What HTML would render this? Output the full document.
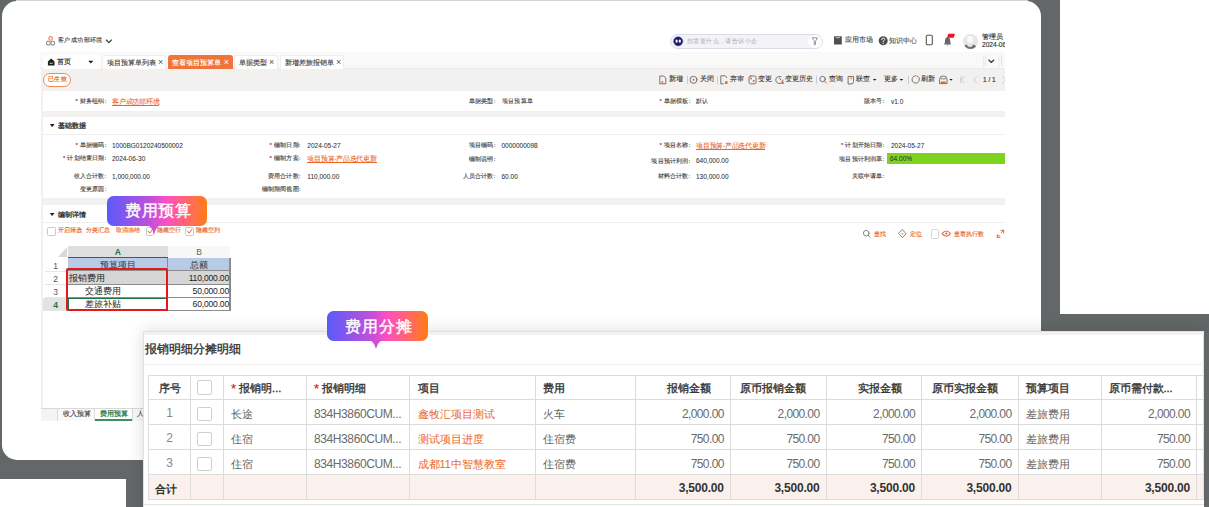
<!DOCTYPE html>
<html><head><meta charset="utf-8">
<style>
*{box-sizing:border-box;margin:0;padding:0}
html,body{width:1209px;height:507px;overflow:hidden;background:#fff;font-family:"Liberation Sans",sans-serif}
.a{position:absolute;white-space:nowrap}
</style></head><body>

<div class="a" style="left:0.00px;top:0.00px;width:1060.00px;height:479.00px;background:#636768"></div>
<div class="a" style="left:126.00px;top:314.00px;width:1083.00px;height:193.00px;background:#636768"></div>
<div class="a" style="left:16.00px;top:0.00px;width:1012.00px;height:1.00px;background:#d2d3d3"></div>
<div class="a" style="left:2px;top:1px;width:1039px;height:459px;background:#fff;border-radius:15px;overflow:hidden"><div class="a" style="left:-2px;top:-1px;width:1209px;height:507px">
<div class="a" style="left:58.00px;top:36.80px;font-size:6.000px;line-height:7.80px;color:#444;font-weight:normal;letter-spacing:0.4px;-webkit-text-stroke:0.14px #444;transform-origin:0 0">客户成功部环境</div>
<div class="a" style="left:670.00px;top:34.00px;width:153.00px;height:15.00px;border-radius:8px;background:#f3f3f8;border:1px solid #dcdce6"></div>
<div class="a" style="left:687.00px;top:37.60px;font-size:6.000px;line-height:7.80px;color:#b4b4bc;font-weight:normal;letter-spacing:0.4px;-webkit-text-stroke:0.05px #b4b4bc;transform-origin:0 0">您需要什么，请告诉小企</div>
<div class="a" style="left:808.00px;top:35.00px;width:13.50px;height:13.00px;border-radius:50%;background:#fff"></div>
<div class="a" style="left:845.00px;top:36.27px;font-size:6.500px;line-height:8.45px;color:#555;font-weight:normal;;-webkit-text-stroke:0.14px #555;transform-origin:0 0">应用市场</div>
<div class="a" style="left:889.00px;top:36.77px;font-size:6.500px;line-height:8.45px;color:#555;font-weight:normal;;-webkit-text-stroke:0.14px #555;transform-origin:0 0">知识中心</div>
<div class="a" style="left:962.5px;top:34px;width:15px;height:15px;border-radius:50%;background:#e6e6e6;overflow:hidden"><div class="a" style="left:4.2px;top:2.2px;width:6.6px;height:6.6px;border-radius:50%;background:#fafafa"></div><div class="a" style="left:0.5px;top:10.3px;width:14px;height:9px;border-radius:50%;background:#6f6f6f"></div><div class="a" style="left:4.5px;top:9.8px;width:6px;height:3px;border-radius:0 0 3px 3px;background:#e6e6e6"></div></div>
<div class="a" style="left:982px;top:33px;width:23px;height:16px;overflow:hidden">
<div class="a" style="left:0.00px;top:0.37px;font-size:6.500px;line-height:8.45px;color:#333;font-weight:normal;;-webkit-text-stroke:0.14px #333;transform-origin:0 0">管理员</div>
<div class="a" style="left:0.00px;top:7.71px;font-size:6.600px;line-height:8.58px;color:#333;font-weight:normal;;-webkit-text-stroke:0.14px #333;transform-origin:0 0">2024-06-01</div>
</div>
<div class="a" style="left:40.00px;top:52.00px;width:965.00px;height:17.00px;background:#f9f9fa;border-bottom:1px solid #ebebeb"></div>
<div class="a" style="left:43.40px;top:55.00px;width:56.60px;height:14.00px;background:#fff;border-radius:3px 3px 0 0"></div>
<div class="a" style="left:57.20px;top:58.07px;font-size:6.500px;line-height:8.45px;color:#333;font-weight:normal;;-webkit-text-stroke:0.2px #333;transform-origin:0 0">首页</div>
<div class="a" style="left:102.00px;top:55.00px;width:64.00px;height:14.00px;background:#fff;border:1px solid #eceef2;border-bottom:none;border-radius:3px 3px 0 0"></div>
<div class="a" style="left:106.50px;top:57.57px;font-size:6.500px;line-height:8.45px;color:#444;font-weight:normal;;-webkit-text-stroke:0.14px #444;transform-origin:0 0">项目预算单列表<span style="font-size:9px;margin-left:2.5px;-webkit-text-stroke:0;vertical-align:-0.5px;color:#555">×</span></div>
<div class="a" style="left:167.80px;top:55.00px;width:65.20px;height:14.00px;background:#f07438;border-radius:3px 3px 0 0"></div>
<div class="a" style="left:172.30px;top:57.57px;font-size:6.500px;line-height:8.45px;color:#fff;font-weight:normal;;-webkit-text-stroke:0.14px #fff;transform-origin:0 0">查看项目预算单<span style="font-size:9px;margin-left:2.5px;-webkit-text-stroke:0;vertical-align:-0.5px">×</span></div>
<div class="a" style="left:234.00px;top:55.00px;width:44.00px;height:14.00px;background:#fff;border:1px solid #eceef2;border-bottom:none;border-radius:3px 3px 0 0"></div>
<div class="a" style="left:238.50px;top:57.57px;font-size:6.500px;line-height:8.45px;color:#444;font-weight:normal;;-webkit-text-stroke:0.14px #444;transform-origin:0 0">单据类型<span style="font-size:9px;margin-left:2.5px;-webkit-text-stroke:0;vertical-align:-0.5px;color:#555">×</span></div>
<div class="a" style="left:280.00px;top:55.00px;width:64.00px;height:14.00px;background:#fff;border:1px solid #eceef2;border-bottom:none;border-radius:3px 3px 0 0"></div>
<div class="a" style="left:284.50px;top:57.57px;font-size:6.500px;line-height:8.45px;color:#444;font-weight:normal;;-webkit-text-stroke:0.14px #444;transform-origin:0 0">新增差旅报销单<span style="font-size:9px;margin-left:2.5px;-webkit-text-stroke:0;vertical-align:-0.5px;color:#555">×</span></div>
<div class="a" style="left:985.00px;top:55.00px;width:1.00px;height:11.00px;background:#e4e4e4"></div>
<div class="a" style="left:1001.00px;top:55.00px;width:1.00px;height:11.00px;background:#e4e4e4"></div>
<div class="a" style="left:41.00px;top:69.00px;width:964.00px;height:351.00px;background:#f2f1ef"></div>
<div class="a" style="left:43.00px;top:73.00px;width:27.70px;height:13.50px;border-radius:7px;border:1.6px solid #f08e58;background:#fff"></div>
<div class="a" style="left:48.20px;top:76.10px;font-size:6.000px;line-height:7.80px;color:#eb6526;font-weight:normal;letter-spacing:0.2px;-webkit-text-stroke:0.2px #eb6526;transform-origin:0 0">已生效</div>
<div class="a" style="left:669.00px;top:75.38px;font-size:6.500px;line-height:8.45px;color:#3a3a3a;font-weight:normal;;-webkit-text-stroke:0.12px #3a3a3a;transform-origin:0 0">新增</div>
<div class="a" style="left:700.00px;top:75.38px;font-size:6.500px;line-height:8.45px;color:#3a3a3a;font-weight:normal;;-webkit-text-stroke:0.12px #3a3a3a;transform-origin:0 0">关闭</div>
<div class="a" style="left:730.00px;top:75.38px;font-size:6.500px;line-height:8.45px;color:#3a3a3a;font-weight:normal;;-webkit-text-stroke:0.12px #3a3a3a;transform-origin:0 0">弃审</div>
<div class="a" style="left:758.00px;top:75.38px;font-size:6.500px;line-height:8.45px;color:#3a3a3a;font-weight:normal;;-webkit-text-stroke:0.12px #3a3a3a;transform-origin:0 0">变更</div>
<div class="a" style="left:785.00px;top:75.38px;font-size:6.500px;line-height:8.45px;color:#3a3a3a;font-weight:normal;;-webkit-text-stroke:0.12px #3a3a3a;transform-origin:0 0">变更历史</div>
<div class="a" style="left:829.00px;top:75.38px;font-size:6.500px;line-height:8.45px;color:#3a3a3a;font-weight:normal;;-webkit-text-stroke:0.12px #3a3a3a;transform-origin:0 0">查询</div>
<div class="a" style="left:856.00px;top:75.38px;font-size:6.500px;line-height:8.45px;color:#3a3a3a;font-weight:normal;;-webkit-text-stroke:0.12px #3a3a3a;transform-origin:0 0">联查</div>
<div class="a" style="left:884.00px;top:75.38px;font-size:6.500px;line-height:8.45px;color:#3a3a3a;font-weight:normal;;-webkit-text-stroke:0.12px #3a3a3a;transform-origin:0 0">更多</div>
<div class="a" style="left:921.00px;top:75.38px;font-size:6.500px;line-height:8.45px;color:#3a3a3a;font-weight:normal;;-webkit-text-stroke:0.12px #3a3a3a;transform-origin:0 0">刷新</div>
<div class="a" style="left:686.80px;top:76.00px;width:1.00px;height:8.00px;background:#c5cbd8"></div>
<div class="a" style="left:717.30px;top:76.00px;width:1.00px;height:8.00px;background:#c5cbd8"></div>
<div class="a" style="left:815.70px;top:76.00px;width:1.00px;height:8.00px;background:#c5cbd8"></div>
<div class="a" style="left:908.10px;top:76.00px;width:1.00px;height:8.00px;background:#c5cbd8"></div>
<div class="a" style="left:983.00px;top:75.58px;font-size:6.500px;line-height:8.45px;color:#333;font-weight:normal;;-webkit-text-stroke:0.15px #333;transform-origin:0 0">1 / 1</div>
<div class="a" style="left:43.00px;top:90.50px;width:962.00px;height:20.00px;background:#fff"></div>
<div class="a" style="left:43.00px;top:116.50px;width:962.00px;height:81.80px;background:#fff"></div>
<div class="a" style="left:43.00px;top:134.00px;width:962.00px;height:1.20px;background:#f0efee"></div>
<div class="a" style="left:43.00px;top:204.80px;width:962.00px;height:216.00px;background:#fff"></div>
<div class="a" style="left:43.00px;top:221.80px;width:962.00px;height:1.20px;background:#f0efee"></div>
<div class="a" style="left:-193.50px;top:97.90px;width:300px;text-align:right;font-size:6.000px;line-height:7.80px;color:#4a4a4a;font-weight:normal;letter-spacing:0.2px;-webkit-text-stroke:0.14px #4a4a4a;transform-origin:100% 0"><span style="color:#e02020">* </span>财务组织:</div>
<div class="a" style="left:112.00px;top:97.58px;font-size:6.500px;line-height:8.45px;color:#eb6526;font-weight:normal;letter-spacing:-0.25px;border-bottom:0.8px solid #eb6526;line-height:7.5px;-webkit-text-stroke:0.08px #eb6526;transform-origin:0 0">客户成功部环境</div>
<div class="a" style="left:195.50px;top:97.90px;width:300px;text-align:right;font-size:6.000px;line-height:7.80px;color:#4a4a4a;font-weight:normal;letter-spacing:0.2px;-webkit-text-stroke:0.14px #4a4a4a;transform-origin:100% 0">单据类型:</div>
<div class="a" style="left:501.50px;top:97.90px;font-size:6.000px;line-height:7.80px;color:#333;font-weight:normal;letter-spacing:0.35px;-webkit-text-stroke:0.06px #333;transform-origin:0 0">项目预算单</div>
<div class="a" style="left:390.50px;top:97.90px;width:300px;text-align:right;font-size:6.000px;line-height:7.80px;color:#4a4a4a;font-weight:normal;letter-spacing:0.2px;-webkit-text-stroke:0.14px #4a4a4a;transform-origin:100% 0"><span style="color:#e02020">* </span>单据模板:</div>
<div class="a" style="left:696.00px;top:97.90px;font-size:6.000px;line-height:7.80px;color:#333;font-weight:normal;letter-spacing:0.35px;-webkit-text-stroke:0.06px #333;transform-origin:0 0">默认</div>
<div class="a" style="left:584.50px;top:97.90px;width:300px;text-align:right;font-size:6.000px;line-height:7.80px;color:#4a4a4a;font-weight:normal;letter-spacing:0.2px;-webkit-text-stroke:0.14px #4a4a4a;transform-origin:100% 0">版本号:</div>
<div class="a" style="left:891.00px;top:97.58px;font-size:6.500px;line-height:8.45px;color:#333;font-weight:normal;;-webkit-text-stroke:0.06px #333;transform-origin:0 0">v1.0</div>
<div class="a" style="left:50px;top:124px;border-left:2.2px solid transparent;border-right:2.2px solid transparent;border-top:3px solid #222"></div>
<div class="a" style="left:58.00px;top:120.95px;font-size:7.000px;line-height:9.10px;color:#333;font-weight:normal;;-webkit-text-stroke:0.3px #333;transform-origin:0 0">基础数据</div>
<div class="a" style="left:-193.50px;top:142.20px;width:300px;text-align:right;font-size:6.000px;line-height:7.80px;color:#4a4a4a;font-weight:normal;letter-spacing:0.2px;-webkit-text-stroke:0.14px #4a4a4a;transform-origin:100% 0"><span style="color:#e02020">* </span>单据编码:</div>
<div class="a" style="left:112.00px;top:141.88px;font-size:6.500px;line-height:8.45px;color:#333;font-weight:normal;;-webkit-text-stroke:0.06px #333;transform-origin:0 0">1000BG0120240500002</div>
<div class="a" style="left:-193.50px;top:155.20px;width:300px;text-align:right;font-size:6.000px;line-height:7.80px;color:#4a4a4a;font-weight:normal;letter-spacing:0.2px;-webkit-text-stroke:0.14px #4a4a4a;transform-origin:100% 0"><span style="color:#e02020">* </span>计划结束日期:</div>
<div class="a" style="left:112.00px;top:154.88px;font-size:6.500px;line-height:8.45px;color:#333;font-weight:normal;;-webkit-text-stroke:0.06px #333;transform-origin:0 0">2024-06-30</div>
<div class="a" style="left:-193.50px;top:173.20px;width:300px;text-align:right;font-size:6.000px;line-height:7.80px;color:#4a4a4a;font-weight:normal;letter-spacing:0.2px;-webkit-text-stroke:0.14px #4a4a4a;transform-origin:100% 0">收入合计数:</div>
<div class="a" style="left:112.00px;top:172.88px;font-size:6.500px;line-height:8.45px;color:#333;font-weight:normal;;-webkit-text-stroke:0.06px #333;transform-origin:0 0">1,000,000.00</div>
<div class="a" style="left:-193.50px;top:185.90px;width:300px;text-align:right;font-size:6.000px;line-height:7.80px;color:#4a4a4a;font-weight:normal;letter-spacing:0.2px;-webkit-text-stroke:0.14px #4a4a4a;transform-origin:100% 0">变更原因:</div>
<div class="a" style="left:0.70px;top:142.20px;width:300px;text-align:right;font-size:6.000px;line-height:7.80px;color:#4a4a4a;font-weight:normal;letter-spacing:0.2px;-webkit-text-stroke:0.14px #4a4a4a;transform-origin:100% 0"><span style="color:#e02020">* </span>编制日期:</div>
<div class="a" style="left:307.30px;top:141.88px;font-size:6.500px;line-height:8.45px;color:#333;font-weight:normal;;-webkit-text-stroke:0.06px #333;transform-origin:0 0">2024-05-27</div>
<div class="a" style="left:0.70px;top:155.20px;width:300px;text-align:right;font-size:6.000px;line-height:7.80px;color:#4a4a4a;font-weight:normal;letter-spacing:0.2px;-webkit-text-stroke:0.14px #4a4a4a;transform-origin:100% 0"><span style="color:#e02020">* </span>编制方案:</div>
<div class="a" style="left:307.30px;top:154.88px;font-size:6.500px;line-height:8.45px;color:#eb6526;font-weight:normal;letter-spacing:-0.25px;border-bottom:0.8px solid #eb6526;line-height:7.5px;-webkit-text-stroke:0.08px #eb6526;transform-origin:0 0">项目预算-产品迭代更新</div>
<div class="a" style="left:0.70px;top:173.20px;width:300px;text-align:right;font-size:6.000px;line-height:7.80px;color:#4a4a4a;font-weight:normal;letter-spacing:0.2px;-webkit-text-stroke:0.14px #4a4a4a;transform-origin:100% 0">费用合计数:</div>
<div class="a" style="left:307.30px;top:172.88px;font-size:6.500px;line-height:8.45px;color:#333;font-weight:normal;;-webkit-text-stroke:0.06px #333;transform-origin:0 0">110,000.00</div>
<div class="a" style="left:0.70px;top:185.90px;width:300px;text-align:right;font-size:6.000px;line-height:7.80px;color:#4a4a4a;font-weight:normal;letter-spacing:0.2px;-webkit-text-stroke:0.14px #4a4a4a;transform-origin:100% 0">编制期间视图:</div>
<div class="a" style="left:195.50px;top:141.90px;width:300px;text-align:right;font-size:6.000px;line-height:7.80px;color:#4a4a4a;font-weight:normal;letter-spacing:0.2px;-webkit-text-stroke:0.14px #4a4a4a;transform-origin:100% 0">项目编码:</div>
<div class="a" style="left:501.50px;top:141.58px;font-size:6.500px;line-height:8.45px;color:#333;font-weight:normal;;-webkit-text-stroke:0.06px #333;transform-origin:0 0">0000000098</div>
<div class="a" style="left:195.50px;top:155.60px;width:300px;text-align:right;font-size:6.000px;line-height:7.80px;color:#4a4a4a;font-weight:normal;letter-spacing:0.2px;-webkit-text-stroke:0.14px #4a4a4a;transform-origin:100% 0">编制说明:</div>
<div class="a" style="left:195.50px;top:173.30px;width:300px;text-align:right;font-size:6.000px;line-height:7.80px;color:#4a4a4a;font-weight:normal;letter-spacing:0.2px;-webkit-text-stroke:0.14px #4a4a4a;transform-origin:100% 0">人员合计数:</div>
<div class="a" style="left:501.50px;top:172.98px;font-size:6.500px;line-height:8.45px;color:#333;font-weight:normal;;-webkit-text-stroke:0.06px #333;transform-origin:0 0">60.00</div>
<div class="a" style="left:390.50px;top:141.90px;width:300px;text-align:right;font-size:6.000px;line-height:7.80px;color:#4a4a4a;font-weight:normal;letter-spacing:0.2px;-webkit-text-stroke:0.14px #4a4a4a;transform-origin:100% 0"><span style="color:#e02020">* </span>项目名称:</div>
<div class="a" style="left:696.00px;top:141.58px;font-size:6.500px;line-height:8.45px;color:#eb6526;font-weight:normal;letter-spacing:-0.25px;border-bottom:0.8px solid #eb6526;line-height:7.5px;-webkit-text-stroke:0.08px #eb6526;transform-origin:0 0">项目预算-产品迭代更新</div>
<div class="a" style="left:390.50px;top:157.80px;width:300px;text-align:right;font-size:6.000px;line-height:7.80px;color:#4a4a4a;font-weight:normal;letter-spacing:0.2px;-webkit-text-stroke:0.14px #4a4a4a;transform-origin:100% 0">项目预计利润:</div>
<div class="a" style="left:696.00px;top:157.48px;font-size:6.500px;line-height:8.45px;color:#333;font-weight:normal;;-webkit-text-stroke:0.06px #333;transform-origin:0 0">640,000.00</div>
<div class="a" style="left:390.50px;top:173.30px;width:300px;text-align:right;font-size:6.000px;line-height:7.80px;color:#4a4a4a;font-weight:normal;letter-spacing:0.2px;-webkit-text-stroke:0.14px #4a4a4a;transform-origin:100% 0">材料合计数:</div>
<div class="a" style="left:696.00px;top:172.98px;font-size:6.500px;line-height:8.45px;color:#333;font-weight:normal;;-webkit-text-stroke:0.06px #333;transform-origin:0 0">130,000.00</div>
<div class="a" style="left:584.50px;top:141.90px;width:300px;text-align:right;font-size:6.000px;line-height:7.80px;color:#4a4a4a;font-weight:normal;letter-spacing:0.2px;-webkit-text-stroke:0.14px #4a4a4a;transform-origin:100% 0"><span style="color:#e02020">* </span>计划开始日期:</div>
<div class="a" style="left:891.00px;top:141.58px;font-size:6.500px;line-height:8.45px;color:#333;font-weight:normal;;-webkit-text-stroke:0.06px #333;transform-origin:0 0">2024-05-27</div>
<div class="a" style="left:887.30px;top:152.50px;width:117.70px;height:11.80px;background:#7ed321"></div>
<div class="a" style="left:584.50px;top:155.60px;width:300px;text-align:right;font-size:6.000px;line-height:7.80px;color:#4a4a4a;font-weight:normal;letter-spacing:0.2px;-webkit-text-stroke:0.14px #4a4a4a;transform-origin:100% 0">项目预计利润率:</div>
<div class="a" style="left:890.00px;top:155.28px;font-size:6.500px;line-height:8.45px;color:#333;font-weight:normal;;-webkit-text-stroke:0.06px #333;transform-origin:0 0">64.00%</div>
<div class="a" style="left:584.50px;top:173.30px;width:300px;text-align:right;font-size:6.000px;line-height:7.80px;color:#4a4a4a;font-weight:normal;letter-spacing:0.2px;-webkit-text-stroke:0.14px #4a4a4a;transform-origin:100% 0">关联申请单:</div>
<div class="a" style="left:50px;top:212.8px;border-left:2.2px solid transparent;border-right:2.2px solid transparent;border-top:3px solid #222"></div>
<div class="a" style="left:58.00px;top:209.75px;font-size:7.000px;line-height:9.10px;color:#333;font-weight:normal;;-webkit-text-stroke:0.3px #333;transform-origin:0 0">编制详情</div>
<div class="a" style="left:47.00px;top:227.00px;width:8.50px;height:8.50px;border:1px solid #c8c8c8;border-radius:1.5px;background:#fff"></div>
<div class="a" style="left:58.00px;top:227.47px;font-size:5.900px;line-height:7.67px;color:#eb6526;font-weight:normal;;-webkit-text-stroke:0.14px #eb6526;transform-origin:0 0">开启筛选</div>
<div class="a" style="left:86.00px;top:227.47px;font-size:5.900px;line-height:7.67px;color:#eb6526;font-weight:normal;;-webkit-text-stroke:0.14px #eb6526;transform-origin:0 0">分类汇总</div>
<div class="a" style="left:116.00px;top:227.47px;font-size:5.900px;line-height:7.67px;color:#eb6526;font-weight:normal;;-webkit-text-stroke:0.14px #eb6526;transform-origin:0 0">取消冻结</div>
<div class="a" style="left:145.50px;top:227.00px;width:8.50px;height:8.50px;border:1px solid #c8c8c8;border-radius:1.5px;background:#fff"></div>
<div class="a" style="left:157.00px;top:227.47px;font-size:5.900px;line-height:7.67px;color:#eb6526;font-weight:normal;;-webkit-text-stroke:0.14px #eb6526;transform-origin:0 0">隐藏空行</div>
<div class="a" style="left:185.00px;top:227.00px;width:8.50px;height:8.50px;border:1px solid #c8c8c8;border-radius:1.5px;background:#fff"></div>
<div class="a" style="left:196.00px;top:227.47px;font-size:5.900px;line-height:7.67px;color:#eb6526;font-weight:normal;;-webkit-text-stroke:0.14px #eb6526;transform-origin:0 0">隐藏空列</div>
<div class="a" style="left:874.00px;top:230.21px;font-size:6.300px;line-height:8.19px;color:#eb6526;font-weight:normal;;-webkit-text-stroke:0.14px #eb6526;transform-origin:0 0">查找</div>
<div class="a" style="left:910.00px;top:230.21px;font-size:6.300px;line-height:8.19px;color:#eb6526;font-weight:normal;;-webkit-text-stroke:0.14px #eb6526;transform-origin:0 0">定位</div>
<div class="a" style="left:931.00px;top:229.00px;width:8.00px;height:9.50px;border:1px solid #d5d5d5;border-radius:1.5px"></div>
<div class="a" style="left:954.00px;top:230.27px;font-size:6.200px;line-height:8.06px;color:#eb6526;font-weight:normal;;-webkit-text-stroke:0.14px #eb6526;transform-origin:0 0">查看执行数</div>
<div class="a" style="left:57.6px;top:247px;width:0;height:0;border-left:9.5px solid transparent;border-bottom:10px solid #d8d8d8"></div>
<div class="a" style="left:68.00px;top:246.00px;width:99.60px;height:12.00px;background:#dedede"></div>
<div class="a" style="left:167.60px;top:246.00px;width:62.80px;height:12.00px;background:#f7f7f7"></div>
<div class="a" style="left:68.00px;top:256.50px;width:99.60px;height:1.50px;background:#217346"></div>
<div class="a" style="left:-32.20px;top:246.78px;width:300px;text-align:center;font-size:8.500px;line-height:11.05px;color:#217346;font-weight:bold;;transform-origin:50% 0">A</div>
<div class="a" style="left:49.00px;top:246.78px;width:300px;text-align:center;font-size:8.500px;line-height:11.05px;color:#666;font-weight:normal;;transform-origin:50% 0">B</div>
<div class="a" style="left:68.00px;top:258.00px;width:99.60px;height:13.40px;background:#b7cbe6;border-bottom:1px solid #8c8c8c;border-right:1px solid #8c8c8c"></div>
<div class="a" style="left:167.60px;top:258.00px;width:62.80px;height:13.40px;background:#b7cbe6;border-bottom:1px solid #8c8c8c;border-right:1px solid #8c8c8c"></div>
<div class="a" style="left:44.60px;top:270.90px;width:23.40px;height:1.00px;background:#e6e6e6"></div>
<div class="a" style="left:-94.30px;top:260.57px;width:300px;text-align:center;font-size:8.500px;line-height:11.05px;color:#555;font-weight:normal;;transform-origin:50% 0">1</div>
<div class="a" style="left:68.00px;top:271.40px;width:99.60px;height:13.40px;background:#d6d6d6;border-bottom:1px solid #8c8c8c;border-right:1px solid #8c8c8c"></div>
<div class="a" style="left:167.60px;top:271.40px;width:62.80px;height:13.40px;background:#d6d6d6;border-bottom:1px solid #8c8c8c;border-right:1px solid #8c8c8c"></div>
<div class="a" style="left:44.60px;top:284.30px;width:23.40px;height:1.00px;background:#e6e6e6"></div>
<div class="a" style="left:-94.30px;top:273.98px;width:300px;text-align:center;font-size:8.500px;line-height:11.05px;color:#555;font-weight:normal;;transform-origin:50% 0">2</div>
<div class="a" style="left:68.00px;top:284.80px;width:99.60px;height:13.00px;background:#fff;border-bottom:1px solid #8c8c8c;border-right:1px solid #8c8c8c"></div>
<div class="a" style="left:167.60px;top:284.80px;width:62.80px;height:13.00px;background:#fff;border-bottom:1px solid #8c8c8c;border-right:1px solid #8c8c8c"></div>
<div class="a" style="left:44.60px;top:297.30px;width:23.40px;height:1.00px;background:#e6e6e6"></div>
<div class="a" style="left:-94.30px;top:287.18px;width:300px;text-align:center;font-size:8.500px;line-height:11.05px;color:#555;font-weight:normal;;transform-origin:50% 0">3</div>
<div class="a" style="left:68.00px;top:297.80px;width:99.60px;height:12.90px;background:#fff;border-bottom:1px solid #8c8c8c;border-right:1px solid #8c8c8c"></div>
<div class="a" style="left:167.60px;top:297.80px;width:62.80px;height:12.90px;background:#fff;border-bottom:1px solid #8c8c8c;border-right:1px solid #8c8c8c"></div>
<div class="a" style="left:43.00px;top:297.80px;width:25.00px;height:12.90px;background:#e3e3e3"></div>
<div class="a" style="left:-94.30px;top:299.93px;width:300px;text-align:center;font-size:8.500px;line-height:11.05px;color:#217346;font-weight:bold;;transform-origin:50% 0">4</div>
<div class="a" style="left:230.00px;top:258.00px;width:1.00px;height:52.70px;background:#8c8c8c"></div>
<div class="a" style="left:-32.20px;top:259.55px;width:300px;text-align:center;font-size:9.000px;line-height:11.70px;color:#333;font-weight:normal;;transform-origin:50% 0">预算项目</div>
<div class="a" style="left:49.00px;top:259.55px;width:300px;text-align:center;font-size:9.000px;line-height:11.70px;color:#333;font-weight:normal;;transform-origin:50% 0">总额</div>
<div class="a" style="left:69.00px;top:272.95px;font-size:9.000px;line-height:11.70px;color:#222;font-weight:normal;;transform-origin:0 0">报销费用</div>
<div class="a" style="left:-71.00px;top:273.21px;width:300px;text-align:right;font-size:8.600px;line-height:11.18px;color:#222;font-weight:normal;letter-spacing:-0.2px;transform-origin:100% 0">110,000.00</div>
<div class="a" style="left:85.00px;top:286.15px;font-size:9.000px;line-height:11.70px;color:#222;font-weight:normal;;transform-origin:0 0">交通费用</div>
<div class="a" style="left:-71.00px;top:286.41px;width:300px;text-align:right;font-size:8.600px;line-height:11.18px;color:#222;font-weight:normal;letter-spacing:-0.2px;transform-origin:100% 0">50,000.00</div>
<div class="a" style="left:85.00px;top:299.05px;font-size:9.000px;line-height:11.70px;color:#222;font-weight:normal;;transform-origin:0 0">差旅补贴</div>
<div class="a" style="left:-71.00px;top:299.31px;width:300px;text-align:right;font-size:8.600px;line-height:11.18px;color:#222;font-weight:normal;letter-spacing:-0.2px;transform-origin:100% 0">60,000.00</div>
<div class="a" style="left:68.00px;top:297.60px;width:99.80px;height:13.20px;border:1.5px solid #217346"></div>
<div class="a" style="left:66.20px;top:267.50px;width:101.40px;height:43.20px;border:2px solid #e31a1c;border-radius:2px"></div>
<div class="a" style="left:41.00px;top:408.00px;width:102.00px;height:13.00px;background:#f4f4f4;border-top:1px solid #d9d9d9"></div>
<div class="a" style="left:57.00px;top:408.00px;width:37.50px;height:13.00px;background:#f9f9f9;border:1px solid #d9d9d9;border-bottom:none"></div>
<div class="a" style="left:63.00px;top:410.18px;font-size:6.800px;line-height:8.84px;color:#444;font-weight:normal;;-webkit-text-stroke:0.14px #444;transform-origin:0 0">收入预算</div>
<div class="a" style="left:94.50px;top:409.00px;width:37.50px;height:12.00px;background:#fff"></div>
<div class="a" style="left:94.50px;top:418.80px;width:37.50px;height:2.00px;background:#3c8f60"></div>
<div class="a" style="left:100.00px;top:409.88px;font-size:6.800px;line-height:8.84px;color:#2f7d4f;font-weight:normal;;-webkit-text-stroke:0.25px #2f7d4f;transform-origin:0 0">费用预算</div>
<div class="a" style="left:132.00px;top:408.00px;width:12.00px;height:13.00px;background:#f9f9f9;border-left:1px solid #d9d9d9;border-top:1px solid #d9d9d9"></div>
<div class="a" style="left:137.00px;top:410.18px;font-size:6.800px;line-height:8.84px;color:#444;font-weight:normal;;-webkit-text-stroke:0.14px #444;transform-origin:0 0">人</div>
<svg class="a" style="left:0;top:0" width="1209" height="507" viewBox="0 0 1209 507" fill="none" stroke-linecap="round" stroke-linejoin="round">
<circle cx="50.6" cy="38.4" r="1.8" stroke="#f08a5d" stroke-width="1.2"/>
<circle cx="48.4" cy="43.2" r="1.9" stroke="#8a8a8a" stroke-width="1.1"/>
<circle cx="52.8" cy="43.2" r="1.9" stroke="#8a8a8a" stroke-width="1.1"/>
<polyline points="106.4,40 108.9,42.6 111.4,40" stroke="#333" stroke-width="1.1"/>
<circle cx="678.2" cy="41.3" r="4.6" fill="#1d1f5c"/>
<circle cx="678.2" cy="41.3" r="4.6" stroke="#4c3df0" stroke-width="0.5"/>
<rect x="675.6" y="39.6" width="2" height="3.2" rx="1" fill="#fff"/>
<rect x="678.8" y="39.6" width="2" height="3.2" rx="1" fill="#fff"/>
<path d="M812.4,37.8 L817.4,37.8 L815.5,41.4 L815.5,44.4 L814.3,45 L814.3,41.4 Z" stroke="#777" stroke-width="0.75"/>
<path d="M834,36.2 h7.8 v8.4 h-7.8 z" fill="#505050"/>
<path d="M836,37.3 q1.9,1.8 3.8,0" stroke="#fff" stroke-width="0.7"/>
<circle cx="883.2" cy="40.8" r="4.5" fill="#4d4d4d"/>
<path d="M881.7,39.6 q0,-1.6 1.5,-1.6 q1.5,0 1.5,1.4 q0,1 -1.5,1.6 v0.8" stroke="#fff" stroke-width="0.9"/>
<circle cx="883.2" cy="43.4" r="0.55" fill="#fff"/>
<rect x="926.3" y="35.3" width="6" height="9.4" rx="1.3" stroke="#555" stroke-width="1.1"/>
<path d="M944,44.5 q1,-1 1,-3.5 q0,-3.8 2.6,-3.8 q2.6,0 2.6,3.8 q0,2.5 1,3.5 z" fill="#666"/>
<path d="M946.6,45.2 h2 l-1,0.9 z" fill="#666"/>
<path d="M948.3,33.8 h6.7 l-1.4,3.9 h-6.5 z" fill="#e8141e"/>
<path d="M47.9,61.6 l3.3,-3 l3.3,3 v4 h-6.6 z" fill="#1e1e1e"/>
<path d="M49.9,63.2 q1.3,1 2.6,0" stroke="#fff" stroke-width="0.8"/>
<path d="M88.2,60.8 h5.2 l-2.6,2.8 z" fill="#1a1a1a"/>
<line x1="983.6" y1="56" x2="983.6" y2="66.5" stroke="#e9e9e9" stroke-width="1"/>
<polyline points="988.8,60 991.3,62.5 993.8,60" stroke="#333" stroke-width="1.1"/>
<polyline points="960.8,76.6 960.8,83" stroke="#c2c8d4" stroke-width="0.9"/><polyline points="964.6,76.6 961.2,79.8 964.6,83" stroke="#c2c8d4" stroke-width="0.9"/>
<polyline points="976.8,76.6 973.6,79.8 976.8,83" stroke="#c2c8d4" stroke-width="0.9"/>
<polyline points="1002.8,76.6 1005,78.8" stroke="#c2c8d4" stroke-width="0.9"/><polyline points="1005,80.8 1002.8,83" stroke="#c2c8d4" stroke-width="0.9"/>
<line x1="999" y1="56" x2="999" y2="66.5" stroke="#e9e9e9" stroke-width="1"/>
<!-- toolbar icons -->
<path d="M660.2,76 h3.6 l2,2 v5.8 h-5.6 z" stroke="#666" stroke-width="0.9"/>
<circle cx="662.4" cy="82" r="0.9" fill="#f0612a"/>
<circle cx="693.5" cy="79.8" r="3.5" stroke="#666" stroke-width="0.9"/>
<circle cx="693.5" cy="79.8" r="1" fill="#f0612a"/>
<path d="M726.5,77.5 v-0.5 l-1.2,-1.2 h-4.5 v8 h2.5" stroke="#666" stroke-width="0.9"/>
<rect x="725" y="81.3" width="2.6" height="2.6" fill="#f0612a"/>
<rect x="749" y="76" width="7" height="7.8" rx="1.5" stroke="#666" stroke-width="0.9"/>
<circle cx="751" cy="78.6" r="1" fill="#f0612a"/><circle cx="753.6" cy="81.1" r="1" fill="#f0612a"/>
<path d="M783,80 a3.6,3.6 0 1 1 -2,-3.3" stroke="#666" stroke-width="0.9"/>
<path d="M779.4,77.8 l1.4,2.2" stroke="#666" stroke-width="0.9"/>
<rect x="781.5" y="81.8" width="2.2" height="2.2" fill="#f0612a"/>
<circle cx="822.6" cy="79" r="2.7" stroke="#666" stroke-width="0.9"/>
<path d="M824.6,81.2 l1.8,1.9" stroke="#f0612a" stroke-width="1"/>
<path d="M848.5,76.5 h5 v5.2 q0,2.3 -2.5,2.3 h-2.5 z" stroke="#666" stroke-width="0.9"/>
<path d="M850,77.8 h2.2 l-1.1,1.7 z" fill="#f0612a"/>
<path d="M872.9,79 h3.6 l-1.8,1.8 z" fill="#1a1a1a"/>
<path d="M899.6,79 h3.6 l-1.8,1.8 z" fill="#1a1a1a"/>
<path d="M912.4,77.5 a3.5,3.5 0 0 1 3.3,-1.8" stroke="#f0612a" stroke-width="1"/>
<path d="M916.8,76 a3.6,3.6 0 1 1 -4.6,2.5" stroke="#666" stroke-width="0.9"/>
<path d="M939.5,83.2 v-3.6 q0,-3.6 3.8,-3.6 q3.8,0 3.8,3.6 v3.6 z" stroke="#666" stroke-width="0.9"/>
<path d="M941,78.8 h4.6" stroke="#666" stroke-width="0.8"/>
<rect x="940.8" y="81.5" width="5" height="1.6" fill="#f0612a"/>
<path d="M949.3,79 h3.4 l-1.7,1.8 z" fill="#1a1a1a"/>
<!-- panel 2/3 -->
<path d="M50.4,124.3 h4.2 l-2.1,2.4 z" fill="#222"/>
<path d="M50.4,213 h4.2 l-2.1,2.4 z" fill="#222"/>
<polyline points="148.2,231.2 149.8,233.2 152.6,229.2" stroke="#eb6526" stroke-width="1"/>
<polyline points="187.6,231.2 189.2,233.2 192,229.2" stroke="#eb6526" stroke-width="1"/>
<circle cx="866.2" cy="233.2" r="2.8" stroke="#777" stroke-width="0.9"/>
<path d="M868.3,235.4 l1.9,2" stroke="#eb6526" stroke-width="1"/>
<path d="M902.5,229.8 l3.7,3.9 l-3.7,3.9 l-3.7,-3.9 z" stroke="#777" stroke-width="0.9"/>
<circle cx="902.5" cy="233.7" r="0.8" fill="#eb6526"/>
<path d="M942.2,233.6 q4.1,-5.2 8.2,0 q-4.1,5.2 -8.2,0 z" stroke="#eb6526" stroke-width="1.1"/>
<circle cx="946.3" cy="233.6" r="1.1" fill="#eb6526"/>
<path d="M1001,230.3 h2.7 v2.7 M1003.6,230.3 l-2.2,2.2" stroke="#eb6526" stroke-width="1"/>
<path d="M997.3,234.6 v2.7 h2.7 M997.3,237.3 l2.2,-2.2" stroke="#eb6526" stroke-width="1"/>
</svg>
</div></div>
<div class="a" style="left:143px;top:331px;width:1061px;height:190px;background:#fff;border:1px solid #e0e0e0;box-shadow:0 0 15px rgba(0,0,0,0.14)"></div>
<div class="a" style="left:144.00px;top:332.00px;width:1060.00px;height:3.00px;background:#f3f2f0"></div>
<div class="a" style="left:1204.00px;top:331.00px;width:5.00px;height:176.00px;background:#636768"></div>
<div class="a" style="left:145.00px;top:342.00px;font-size:12.300px;line-height:15.99px;color:#333;font-weight:normal;;-webkit-text-stroke:0.35px #333;transform-origin:0 0">报销明细分摊明细</div>
<div class="a" style="left:144.00px;top:364.00px;width:1060.00px;height:1.00px;background:#efefef"></div>
<div class="a" style="left:148.70px;top:474.20px;width:1054.80px;height:25.40px;background:#fbf1ec"></div>
<div class="a" style="left:148.20px;top:375.00px;width:1.00px;height:124.60px;background:#dcdcdc"></div>
<div class="a" style="left:189.90px;top:375.00px;width:1.00px;height:124.60px;background:#dcdcdc"></div>
<div class="a" style="left:222.90px;top:375.00px;width:1.00px;height:124.60px;background:#dcdcdc"></div>
<div class="a" style="left:305.50px;top:375.00px;width:1.00px;height:124.60px;background:#dcdcdc"></div>
<div class="a" style="left:409.40px;top:375.00px;width:1.00px;height:124.60px;background:#dcdcdc"></div>
<div class="a" style="left:534.70px;top:375.00px;width:1.00px;height:124.60px;background:#dcdcdc"></div>
<div class="a" style="left:634.50px;top:375.00px;width:1.00px;height:124.60px;background:#dcdcdc"></div>
<div class="a" style="left:729.90px;top:375.00px;width:1.00px;height:124.60px;background:#dcdcdc"></div>
<div class="a" style="left:825.70px;top:375.00px;width:1.00px;height:124.60px;background:#dcdcdc"></div>
<div class="a" style="left:921.10px;top:375.00px;width:1.00px;height:124.60px;background:#dcdcdc"></div>
<div class="a" style="left:1017.70px;top:375.00px;width:1.00px;height:124.60px;background:#dcdcdc"></div>
<div class="a" style="left:1100.50px;top:375.00px;width:1.00px;height:124.60px;background:#dcdcdc"></div>
<div class="a" style="left:1196.00px;top:375.00px;width:1.00px;height:124.60px;background:#dcdcdc"></div>
<div class="a" style="left:148.70px;top:374.50px;width:1054.80px;height:1.00px;background:#dcdcdc"></div>
<div class="a" style="left:148.70px;top:399.00px;width:1054.80px;height:1.00px;background:#dcdcdc"></div>
<div class="a" style="left:148.70px;top:423.80px;width:1054.80px;height:1.00px;background:#dcdcdc"></div>
<div class="a" style="left:148.70px;top:448.70px;width:1054.80px;height:1.00px;background:#dcdcdc"></div>
<div class="a" style="left:148.70px;top:473.70px;width:1054.80px;height:1.00px;background:#dcdcdc"></div>
<div class="a" style="left:148.70px;top:499.10px;width:1054.80px;height:1.00px;background:#dcdcdc"></div>
<div class="a" style="left:19.60px;top:380.65px;width:300px;text-align:center;font-size:11.000px;line-height:14.30px;color:#333;font-weight:normal;;-webkit-text-stroke:0.35px #333;transform-origin:50% 0">序号</div>
<div class="a" style="left:197.40px;top:380.30px;width:14.20px;height:14.40px;border:1px solid #cfcfcf;border-radius:2px;background:#fff"></div>
<div class="a" style="left:231.00px;top:381.35px;font-size:11.000px;line-height:14.30px;color:#333;font-weight:normal;;-webkit-text-stroke:0.35px #333;transform-origin:0 0"><span style="color:#e02020;font-size:13px;vertical-align:-1px;-webkit-text-stroke:0.2px #e02020">*</span>&nbsp;报销明...</div>
<div class="a" style="left:314.00px;top:381.35px;font-size:11.000px;line-height:14.30px;color:#333;font-weight:normal;;-webkit-text-stroke:0.35px #333;transform-origin:0 0"><span style="color:#e02020;font-size:13px;vertical-align:-1px;-webkit-text-stroke:0.2px #e02020">*</span>&nbsp;报销明细</div>
<div class="a" style="left:417.50px;top:380.65px;font-size:11.000px;line-height:14.30px;color:#333;font-weight:normal;;-webkit-text-stroke:0.35px #333;transform-origin:0 0">项目</div>
<div class="a" style="left:542.50px;top:380.65px;font-size:11.000px;line-height:14.30px;color:#333;font-weight:normal;;-webkit-text-stroke:0.35px #333;transform-origin:0 0">费用</div>
<div class="a" style="left:410.50px;top:380.65px;width:300px;text-align:right;font-size:11.000px;line-height:14.30px;color:#333;font-weight:normal;;-webkit-text-stroke:0.35px #333;transform-origin:100% 0">报销金额</div>
<div class="a" style="left:506.00px;top:380.65px;width:300px;text-align:right;font-size:11.000px;line-height:14.30px;color:#333;font-weight:normal;;-webkit-text-stroke:0.35px #333;transform-origin:100% 0">原币报销金额</div>
<div class="a" style="left:601.80px;top:380.65px;width:300px;text-align:right;font-size:11.000px;line-height:14.30px;color:#333;font-weight:normal;;-webkit-text-stroke:0.35px #333;transform-origin:100% 0">实报金额</div>
<div class="a" style="left:697.80px;top:380.65px;width:300px;text-align:right;font-size:11.000px;line-height:14.30px;color:#333;font-weight:normal;;-webkit-text-stroke:0.35px #333;transform-origin:100% 0">原币实报金额</div>
<div class="a" style="left:1025.50px;top:380.65px;font-size:11.000px;line-height:14.30px;color:#333;font-weight:normal;;-webkit-text-stroke:0.35px #333;transform-origin:0 0">预算项目</div>
<div class="a" style="left:1108.50px;top:380.65px;font-size:11.000px;line-height:14.30px;color:#333;font-weight:normal;;-webkit-text-stroke:0.35px #333;transform-origin:0 0">原币需付款...</div>
<div class="a" style="left:19.60px;top:406.40px;width:300px;text-align:center;font-size:12.000px;line-height:15.60px;color:#888;font-weight:normal;;transform-origin:50% 0">1</div>
<div class="a" style="left:197.40px;top:406.70px;width:14.20px;height:14.40px;border:1px solid #cfcfcf;border-radius:2px;background:#fff"></div>
<div class="a" style="left:231.00px;top:407.18px;font-size:10.800px;line-height:14.04px;color:#666;font-weight:normal;;transform-origin:0 0">长途</div>
<div class="a" style="left:314.00px;top:406.90px;font-size:12.000px;line-height:15.60px;color:#6a6a6a;font-weight:normal;letter-spacing:-0.4px;transform-origin:0 0">834H3860CUM...</div>
<div class="a" style="left:417.50px;top:407.18px;font-size:10.800px;line-height:14.04px;color:#eb6526;font-weight:normal;;transform-origin:0 0">鑫牧汇项目测试</div>
<div class="a" style="left:542.50px;top:407.18px;font-size:10.800px;line-height:14.04px;color:#666;font-weight:normal;;transform-origin:0 0">火车</div>
<div class="a" style="left:423.80px;top:406.90px;width:300px;text-align:right;font-size:12.000px;line-height:15.60px;color:#6a6a6a;font-weight:normal;letter-spacing:-0.6px;transform-origin:100% 0">2,000.00</div>
<div class="a" style="left:519.50px;top:406.90px;width:300px;text-align:right;font-size:12.000px;line-height:15.60px;color:#6a6a6a;font-weight:normal;letter-spacing:-0.6px;transform-origin:100% 0">2,000.00</div>
<div class="a" style="left:615.00px;top:406.90px;width:300px;text-align:right;font-size:12.000px;line-height:15.60px;color:#6a6a6a;font-weight:normal;letter-spacing:-0.6px;transform-origin:100% 0">2,000.00</div>
<div class="a" style="left:711.50px;top:406.90px;width:300px;text-align:right;font-size:12.000px;line-height:15.60px;color:#6a6a6a;font-weight:normal;letter-spacing:-0.6px;transform-origin:100% 0">2,000.00</div>
<div class="a" style="left:890.00px;top:406.90px;width:300px;text-align:right;font-size:12.000px;line-height:15.60px;color:#6a6a6a;font-weight:normal;letter-spacing:-0.6px;transform-origin:100% 0">2,000.00</div>
<div class="a" style="left:1025.50px;top:407.18px;font-size:10.800px;line-height:14.04px;color:#666;font-weight:normal;;transform-origin:0 0">差旅费用</div>
<div class="a" style="left:19.60px;top:431.25px;width:300px;text-align:center;font-size:12.000px;line-height:15.60px;color:#888;font-weight:normal;;transform-origin:50% 0">2</div>
<div class="a" style="left:197.40px;top:431.55px;width:14.20px;height:14.40px;border:1px solid #cfcfcf;border-radius:2px;background:#fff"></div>
<div class="a" style="left:231.00px;top:432.03px;font-size:10.800px;line-height:14.04px;color:#666;font-weight:normal;;transform-origin:0 0">住宿</div>
<div class="a" style="left:314.00px;top:431.75px;font-size:12.000px;line-height:15.60px;color:#6a6a6a;font-weight:normal;letter-spacing:-0.4px;transform-origin:0 0">834H3860CUM...</div>
<div class="a" style="left:417.50px;top:432.03px;font-size:10.800px;line-height:14.04px;color:#eb6526;font-weight:normal;;transform-origin:0 0">测试项目进度</div>
<div class="a" style="left:542.50px;top:432.03px;font-size:10.800px;line-height:14.04px;color:#666;font-weight:normal;;transform-origin:0 0">住宿费</div>
<div class="a" style="left:423.80px;top:431.75px;width:300px;text-align:right;font-size:12.000px;line-height:15.60px;color:#6a6a6a;font-weight:normal;letter-spacing:-0.6px;transform-origin:100% 0">750.00</div>
<div class="a" style="left:519.50px;top:431.75px;width:300px;text-align:right;font-size:12.000px;line-height:15.60px;color:#6a6a6a;font-weight:normal;letter-spacing:-0.6px;transform-origin:100% 0">750.00</div>
<div class="a" style="left:615.00px;top:431.75px;width:300px;text-align:right;font-size:12.000px;line-height:15.60px;color:#6a6a6a;font-weight:normal;letter-spacing:-0.6px;transform-origin:100% 0">750.00</div>
<div class="a" style="left:711.50px;top:431.75px;width:300px;text-align:right;font-size:12.000px;line-height:15.60px;color:#6a6a6a;font-weight:normal;letter-spacing:-0.6px;transform-origin:100% 0">750.00</div>
<div class="a" style="left:890.00px;top:431.75px;width:300px;text-align:right;font-size:12.000px;line-height:15.60px;color:#6a6a6a;font-weight:normal;letter-spacing:-0.6px;transform-origin:100% 0">750.00</div>
<div class="a" style="left:1025.50px;top:432.03px;font-size:10.800px;line-height:14.04px;color:#666;font-weight:normal;;transform-origin:0 0">差旅费用</div>
<div class="a" style="left:19.60px;top:456.20px;width:300px;text-align:center;font-size:12.000px;line-height:15.60px;color:#888;font-weight:normal;;transform-origin:50% 0">3</div>
<div class="a" style="left:197.40px;top:456.50px;width:14.20px;height:14.40px;border:1px solid #cfcfcf;border-radius:2px;background:#fff"></div>
<div class="a" style="left:231.00px;top:456.98px;font-size:10.800px;line-height:14.04px;color:#666;font-weight:normal;;transform-origin:0 0">住宿</div>
<div class="a" style="left:314.00px;top:456.70px;font-size:12.000px;line-height:15.60px;color:#6a6a6a;font-weight:normal;letter-spacing:-0.4px;transform-origin:0 0">834H3860CUM...</div>
<div class="a" style="left:417.50px;top:456.98px;font-size:10.800px;line-height:14.04px;color:#eb6526;font-weight:normal;;transform-origin:0 0">成都11中智慧教室</div>
<div class="a" style="left:542.50px;top:456.98px;font-size:10.800px;line-height:14.04px;color:#666;font-weight:normal;;transform-origin:0 0">住宿费</div>
<div class="a" style="left:423.80px;top:456.70px;width:300px;text-align:right;font-size:12.000px;line-height:15.60px;color:#6a6a6a;font-weight:normal;letter-spacing:-0.6px;transform-origin:100% 0">750.00</div>
<div class="a" style="left:519.50px;top:456.70px;width:300px;text-align:right;font-size:12.000px;line-height:15.60px;color:#6a6a6a;font-weight:normal;letter-spacing:-0.6px;transform-origin:100% 0">750.00</div>
<div class="a" style="left:615.00px;top:456.70px;width:300px;text-align:right;font-size:12.000px;line-height:15.60px;color:#6a6a6a;font-weight:normal;letter-spacing:-0.6px;transform-origin:100% 0">750.00</div>
<div class="a" style="left:711.50px;top:456.70px;width:300px;text-align:right;font-size:12.000px;line-height:15.60px;color:#6a6a6a;font-weight:normal;letter-spacing:-0.6px;transform-origin:100% 0">750.00</div>
<div class="a" style="left:890.00px;top:456.70px;width:300px;text-align:right;font-size:12.000px;line-height:15.60px;color:#6a6a6a;font-weight:normal;letter-spacing:-0.6px;transform-origin:100% 0">750.00</div>
<div class="a" style="left:1025.50px;top:456.98px;font-size:10.800px;line-height:14.04px;color:#666;font-weight:normal;;transform-origin:0 0">差旅费用</div>
<div class="a" style="left:155.00px;top:481.55px;font-size:11.000px;line-height:14.30px;color:#333;font-weight:bold;;transform-origin:0 0">合计</div>
<div class="a" style="left:423.80px;top:480.90px;width:300px;text-align:right;font-size:12.000px;line-height:15.60px;color:#333;font-weight:bold;letter-spacing:-0.2px;transform-origin:100% 0">3,500.00</div>
<div class="a" style="left:519.50px;top:480.90px;width:300px;text-align:right;font-size:12.000px;line-height:15.60px;color:#333;font-weight:bold;letter-spacing:-0.2px;transform-origin:100% 0">3,500.00</div>
<div class="a" style="left:615.00px;top:480.90px;width:300px;text-align:right;font-size:12.000px;line-height:15.60px;color:#333;font-weight:bold;letter-spacing:-0.2px;transform-origin:100% 0">3,500.00</div>
<div class="a" style="left:711.50px;top:480.90px;width:300px;text-align:right;font-size:12.000px;line-height:15.60px;color:#333;font-weight:bold;letter-spacing:-0.2px;transform-origin:100% 0">3,500.00</div>
<div class="a" style="left:890.00px;top:480.90px;width:300px;text-align:right;font-size:12.000px;line-height:15.60px;color:#333;font-weight:bold;letter-spacing:-0.2px;transform-origin:100% 0">3,500.00</div>
<div class="a" style="left:144.00px;top:500.20px;width:1060.00px;height:6.80px;background:#fff"></div>
<div class="a" style="left:144.00px;top:503.50px;width:1060.00px;height:1.20px;background:#e4e4e4"></div>
<div class="a" style="left:107px;top:195.6px;width:100px;height:30px;border-radius:6.5px;background:linear-gradient(90deg,#5a5bfa 0%,#c450d8 45%,#ff4fc2 60%,#ff7d14 100%)"></div>
<svg class="a" style="left:146px;top:224.6px" width="16" height="10.400000000000006" viewBox="0 0 16 10.400000000000006"><path d="M0,0 Q6,0.5 8,9.400000000000006 Q10,0.5 16,0 Z" fill="#d04fd0"/></svg>
<div class="a" style="left:108.4px;top:197.2px;width:100px;height:30px;text-align:center;color:#fff;font-size:16.3px;line-height:27px;letter-spacing:0.7px;-webkit-text-stroke:0.35px #fff">费用预算</div>
<div class="a" style="left:327px;top:311px;width:101px;height:30px;border-radius:6.5px;background:linear-gradient(90deg,#5a5bfa 0%,#c450d8 45%,#ff4fc2 60%,#ff7d14 100%)"></div>
<svg class="a" style="left:367.6px;top:340px" width="16" height="10" viewBox="0 0 16 10"><path d="M0,0 Q6,0.5 8,9 Q10,0.5 16,0 Z" fill="#d04fd0"/></svg>
<div class="a" style="left:328.4px;top:312.6px;width:101px;height:30px;text-align:center;color:#fff;font-size:16.3px;line-height:27px;letter-spacing:0.7px;-webkit-text-stroke:0.35px #fff">费用分摊</div>
</body></html>
